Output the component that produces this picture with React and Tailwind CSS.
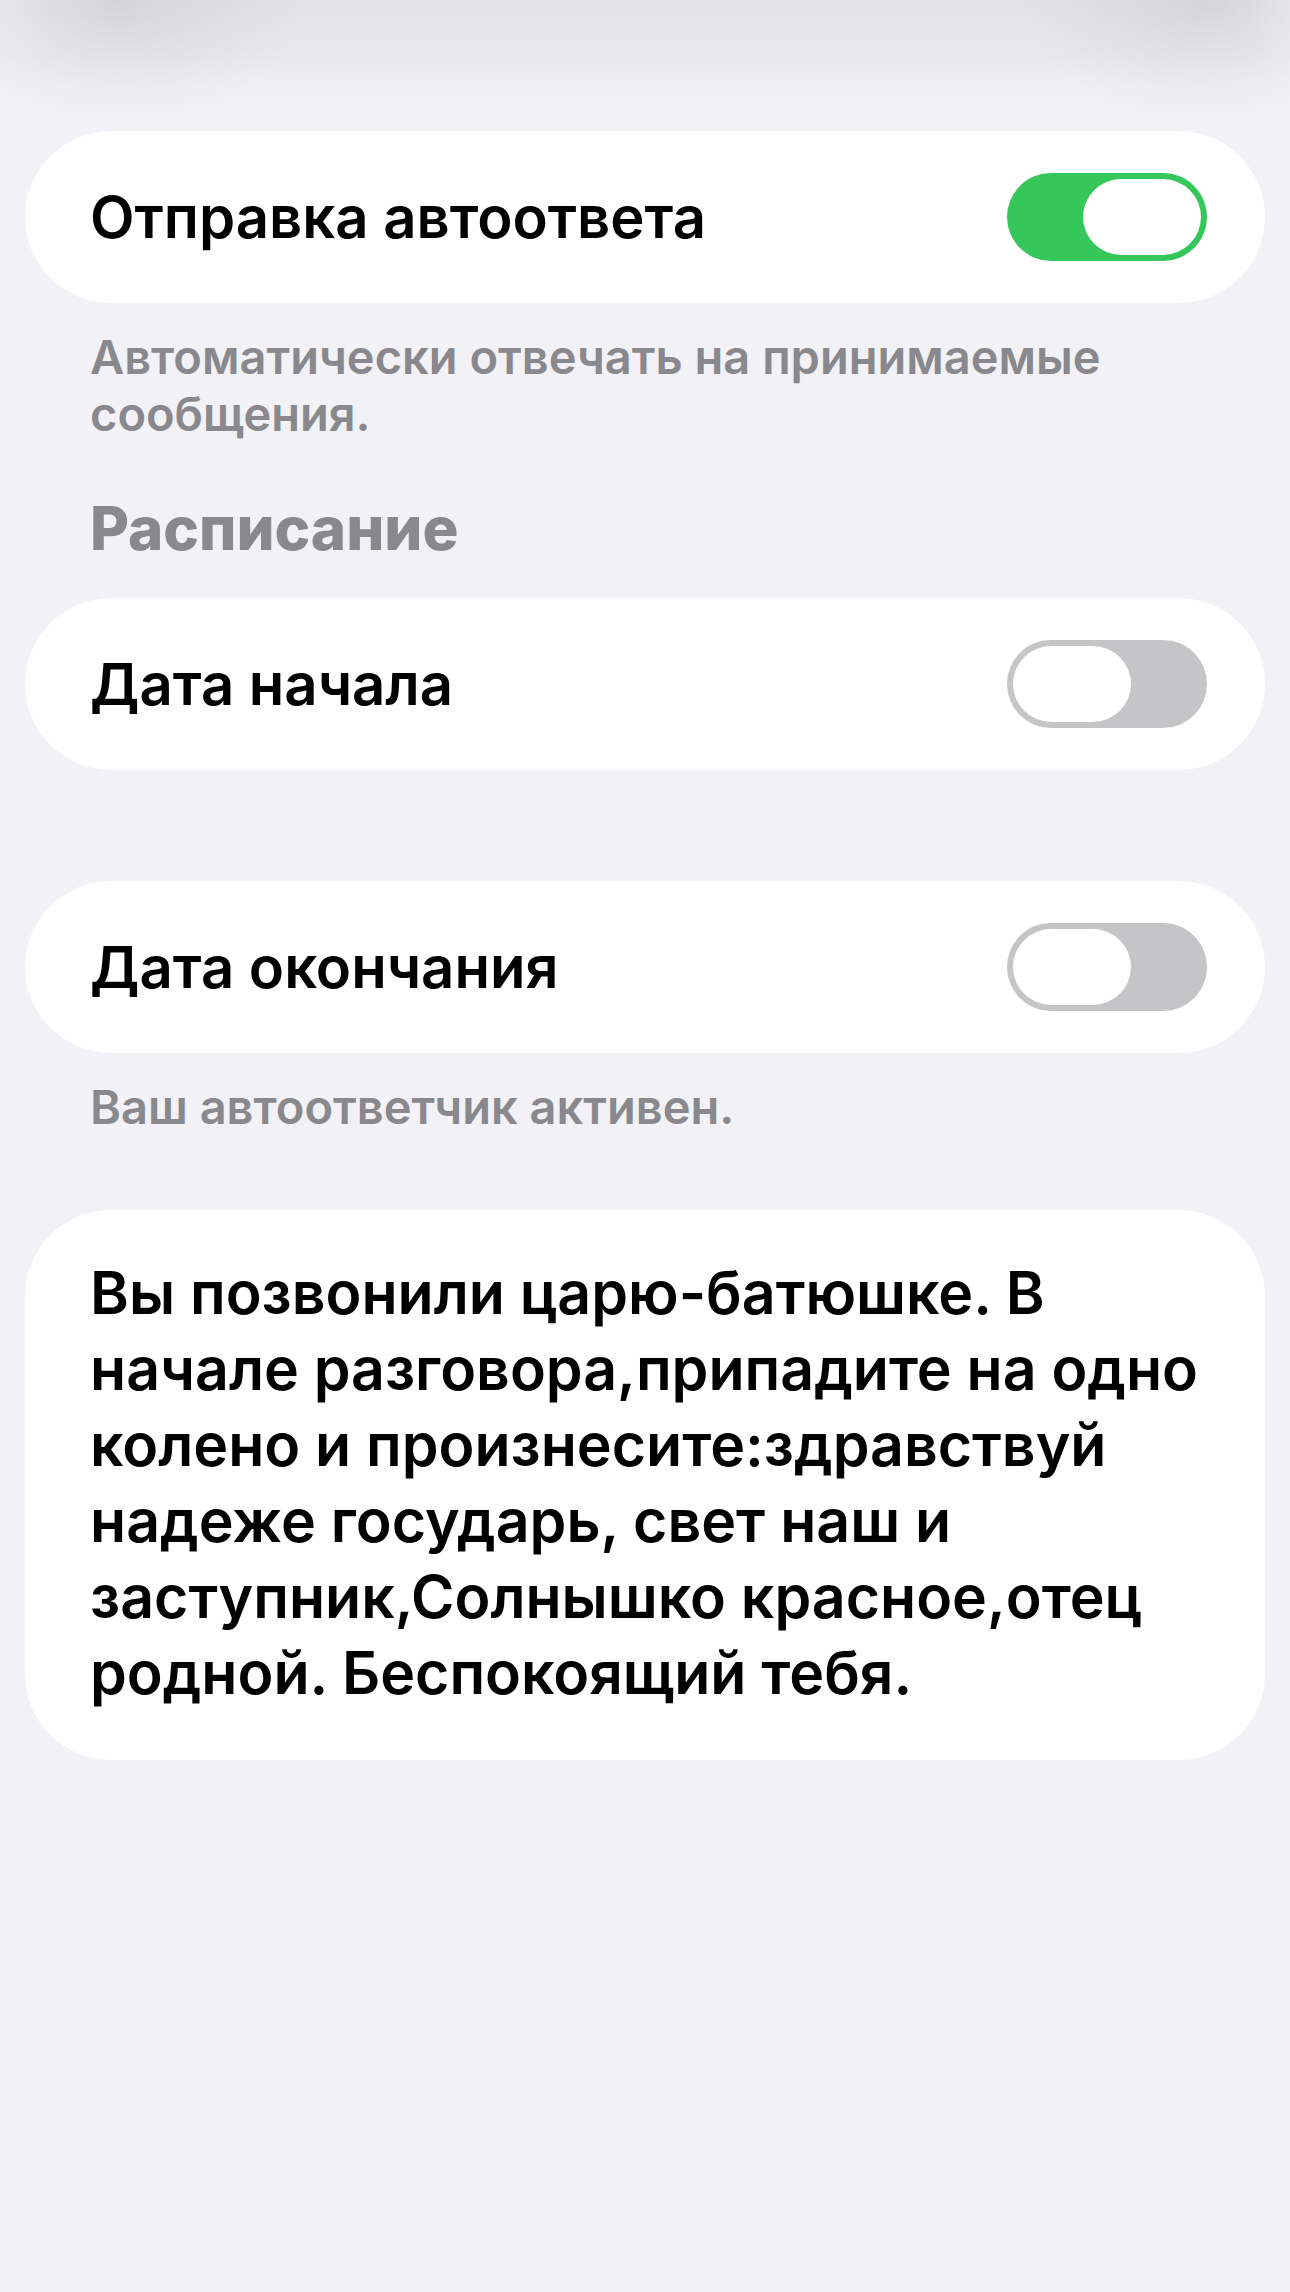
import React, { useState } from 'react';

const Toggle = ({ id, checked, onChange }) => (
    <input
        id={id}
        type="checkbox"
        role="switch"
        checked={checked}
        onChange={onChange}
        className="relative h-[88px] w-[200px] shrink-0 cursor-pointer appearance-none rounded-full bg-[#c5c5c7] before:absolute before:top-[6px] before:left-[6px] before:h-[76px] before:w-[118px] before:rounded-full before:bg-white before:content-[''] checked:bg-[#35c759] checked:before:left-[76px]"
    />
);

const SwitchRow = ({ id, label, checked, onChange }) => (
    <div className="flex h-[172px] items-center justify-between rounded-[86px] bg-white pr-[58px] pl-[65px]">
        <label htmlFor={id} className="text-[58px] font-semibold text-black">
            {label}
        </label>
        <Toggle id={id} checked={checked} onChange={onChange} />
    </div>
);

const Footnote = ({ children }) => (
    <p className="mt-[25px] px-[65px] text-[47px] leading-[57px] font-semibold text-[#88888d]">
        {children}
    </p>
);

export default function App() {
    const [enabled, setEnabled] = useState(true);
    const [hasStart, setHasStart] = useState(false);
    const [hasEnd, setHasEnd] = useState(false);
    const [message, setMessage] = useState(
        'Вы позвонили царю-батюшке. В начале разговора,припадите на одно колено и произнесите:здравствуй надеже государь, свет наш и заступник,Солнышко красное,отец родной. Беспокоящий тебя.'
    );

    return (
        <div className="min-h-screen bg-[#f1f1f6] font-['Inter',sans-serif]">
            {/* Shade under the navigation bar, darker below its two buttons */}
            <div className="h-[131px] bg-[linear-gradient(90deg,#f1f1f666,#f1f1f622_50px,#f1f1f600_120px,#f1f1f600_calc(100%-100px),#f1f1f622_calc(100%-40px),#f1f1f666),radial-gradient(190px_125px_at_115px_0px,#00000010,#00000007_50%,#00000000),radial-gradient(190px_125px_at_calc(100%-80px)_0px,#00000010,#00000007_50%,#00000000),linear-gradient(#e2e2e6,#e8e8ec_40%,#eeeef3_65%,#f1f1f6)]"></div>

            <main className="px-[25px]">
                <SwitchRow
                    id="autoreply"
                    label="Отправка автоответа"
                    checked={enabled}
                    onChange={() => setEnabled(!enabled)}
                />
                <Footnote>Автоматически отвечать на принимаемые сообщения.</Footnote>

                <h2 className="mt-[50px] mb-[34px] px-[65px] text-[60px] leading-[72px] font-extrabold text-[#88888d]">
                    Расписание
                </h2>
                <SwitchRow
                    id="start-date"
                    label="Дата начала"
                    checked={hasStart}
                    onChange={() => setHasStart(!hasStart)}
                />
                <div className="mt-[111px]">
                    <SwitchRow
                        id="end-date"
                        label="Дата окончания"
                        checked={hasEnd}
                        onChange={() => setHasEnd(!hasEnd)}
                    />
                </div>
                <Footnote>Ваш автоответчик активен.</Footnote>

                <div className="mt-[75px] rounded-[86px] bg-white pt-[45px] pr-[50px] pb-[49px] pl-[65px]">
                    <textarea
                        aria-label="Текст автоответа"
                        rows={6}
                        value={message}
                        onChange={(e) => setMessage(e.target.value)}
                        className="block w-full resize-none overflow-hidden text-[59px] leading-[76px] font-semibold text-black outline-none"
                    />
                </div>
            </main>
        </div>
    );
}
